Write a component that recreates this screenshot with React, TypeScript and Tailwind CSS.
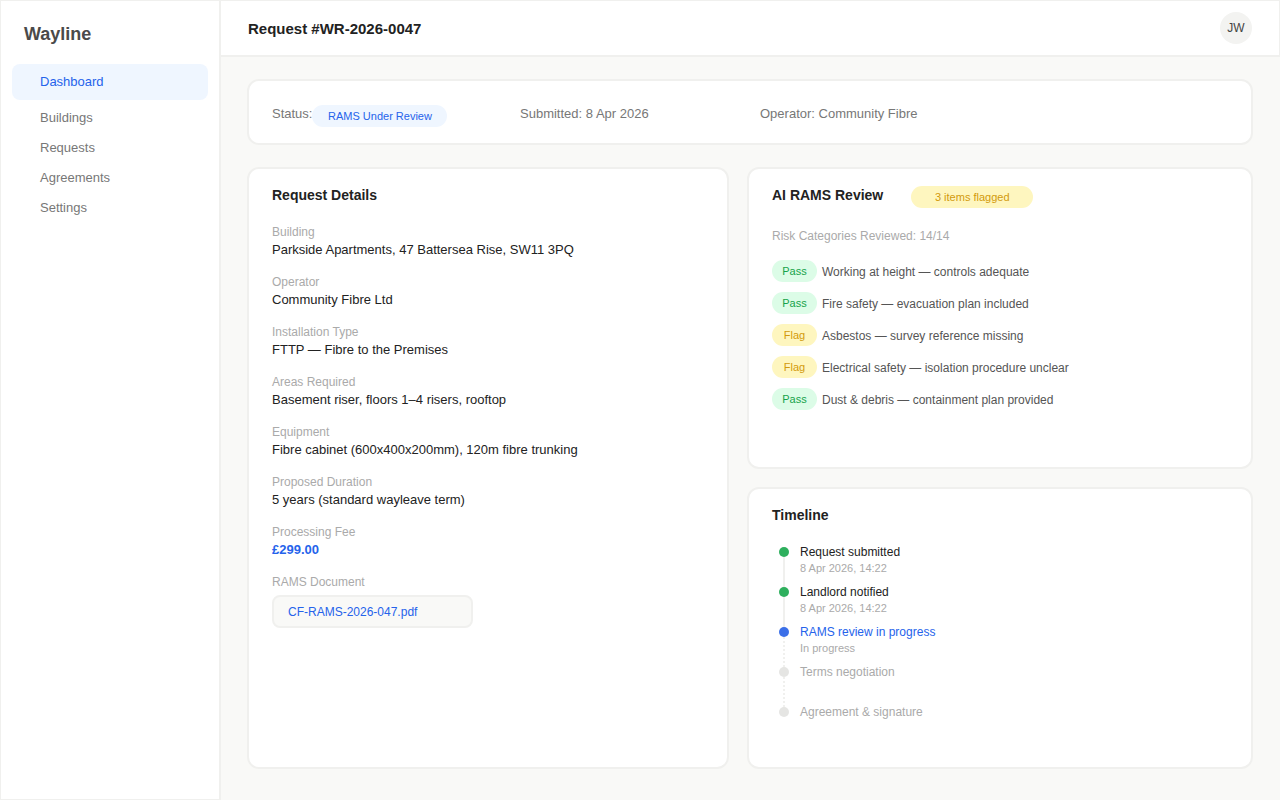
const navItems = ["Buildings", "Requests", "Agreements", "Settings"]

const details = [
  { label: "Building", value: "Parkside Apartments, 47 Battersea Rise, SW11 3PQ" },
  { label: "Operator", value: "Community Fibre Ltd" },
  { label: "Installation Type", value: "FTTP — Fibre to the Premises" },
  { label: "Areas Required", value: "Basement riser, floors 1–4 risers, rooftop" },
  { label: "Equipment", value: "Fibre cabinet (600x400x200mm), 120m fibre trunking" },
  { label: "Proposed Duration", value: "5 years (standard wayleave term)" },
]

const risks = [
  { status: "Pass", text: "Working at height — controls adequate" },
  { status: "Pass", text: "Fire safety — evacuation plan included" },
  { status: "Flag", text: "Asbestos — survey reference missing" },
  { status: "Flag", text: "Electrical safety — isolation procedure unclear" },
  { status: "Pass", text: "Dust & debris — containment plan provided" },
]

const timeline = [
  { title: "Request submitted", sub: "8 Apr 2026, 14:22", state: "done" },
  { title: "Landlord notified", sub: "8 Apr 2026, 14:22", state: "done" },
  { title: "RAMS review in progress", sub: "In progress", state: "active" },
  { title: "Terms negotiation", sub: "", state: "todo" },
  { title: "Agreement & signature", sub: "", state: "todo" },
]

function Card({ className, children }: { className: string; children: React.ReactNode }) {
  return <div className={`bg-white border-2 border-[#f0f0ee] rounded-xl ${className}`}>{children}</div>
}

export default function App() {
  return (
    <div className="flex h-[800px] w-[1280px] overflow-hidden bg-[#f9f9f7] font-['Liberation_Sans',Arial,sans-serif]">
      <aside className="w-[221px] shrink-0 bg-white border border-r-2 border-[#f0f0ee] px-[11px] pt-[22px]">
        <div className="pl-[12px] text-[18px] leading-[22px] font-bold text-[#4a4a4a]">Wayline</div>
        <nav className="mt-[19px] flex flex-col">
          <a className="h-9 mb-[3px] flex items-center rounded-lg bg-[#eff6ff] pl-[28px] text-[13px] text-[#2563eb]">Dashboard</a>
          {navItems.map((item) => (
            <a key={item} className="h-[30px] flex items-center pl-[28px] text-[13px] text-[#777777]">{item}</a>
          ))}
        </nav>
      </aside>

      <div className="flex-1 min-w-0 flex flex-col">
        <header className="h-[57px] shrink-0 bg-white border-t border-r border-b-2 border-[#f0f0ee] flex items-center justify-between pl-[27px] pr-[27px]">
          <h1 className="mt-[2px] text-[15px] font-bold text-[#222222]">Request #WR-2026-0047</h1>
          <div className="w-8 h-8 rounded-full bg-[#f3f3f1] flex items-center justify-center text-[12px] text-[#444444]">JW</div>
        </header>

        <main className="flex-1 min-h-0 pl-[26px] pr-[27px] pt-[22px] pb-[31px] flex flex-col gap-[22px]">
          <Card className="h-[66px] shrink-0 flex items-center pl-[23px] pt-[4px] text-[13px] text-[#777777]">
            <div className="w-[248px] flex items-center">
              <span>Status:</span>
              <span className="mt-[4px] h-[22px] w-[135px] flex items-center justify-center rounded-full bg-[#eff6ff] text-[11px] text-[#2563eb]">RAMS Under Review</span>
            </div>
            <div className="w-[240px]">Submitted: 8 Apr 2026</div>
            <div>Operator: Community Fibre</div>
          </Card>

          <div className="flex-1 min-h-0 flex gap-[18px]">
            <Card className="w-[482px] shrink-0 pl-[23px] pt-[16px]">
              <h2 className="text-[14px] leading-[20px] font-bold text-[#222222]">Request Details</h2>
              <dl className="mt-[18px] flex flex-col gap-[14px]">
                {details.map((d) => (
                  <div key={d.label}>
                    <dt className="text-[12px] leading-[18px] text-[#aaaaaa]">{d.label}</dt>
                    <dd className="text-[13px] leading-[18px] text-[#222222]">{d.value}</dd>
                  </div>
                ))}
                <div>
                  <dt className="text-[12px] leading-[18px] text-[#aaaaaa]">Processing Fee</dt>
                  <dd className="text-[13px] leading-[18px] font-bold text-[#2563eb]">£299.00</dd>
                </div>
                <div>
                  <dt className="text-[12px] leading-[18px] text-[#aaaaaa]">RAMS Document</dt>
                  <dd className="mt-[4px] w-[201px] h-[33px] flex items-center pl-[14px] rounded-lg bg-[#f9f9f7] border-2 border-[#f0f0ee] text-[12px] text-[#2563eb]">CF-RAMS-2026-047.pdf</dd>
                </div>
              </dl>
            </Card>

            <div className="flex-1 min-w-0 flex flex-col gap-[18px]">
              <Card className="h-[302px] shrink-0 pl-[23px] pt-[15px]">
                <div className="flex items-center h-[22px]">
                  <h2 className="text-[14px] font-bold text-[#222222]">AI RAMS Review</h2>
                  <span className="ml-[28px] mt-[4px] h-[22px] w-[122px] flex items-center justify-center rounded-full bg-[#fef6bf] text-[11px] text-[#d29a0c]">3 items flagged</span>
                </div>
                <div className="mt-[21px] text-[12px] leading-[18px] text-[#aaaaaa]">Risk Categories Reviewed: 14/14</div>
                <ul className="mt-[16px] flex flex-col gap-[10px]">
                  {risks.map((r) => (
                    <li key={r.text} className="flex items-center gap-[5px] h-[22px]">
                      <span className={`-mt-[2px] h-[22px] w-[45px] flex items-center justify-center rounded-full text-[11px] ${r.status === "Pass" ? "bg-[#dcfce7] text-[#16a34a]" : "bg-[#fef6bf] text-[#d29a0c]"}`}>{r.status}</span>
                      <span className="text-[12px] text-[#555555]">{r.text}</span>
                    </li>
                  ))}
                </ul>
              </Card>

              <Card className="flex-1 min-h-0 pl-[23px] pt-[16px]">
                <h2 className="text-[14px] leading-[20px] font-bold text-[#222222]">Timeline</h2>
                <ol className="mt-[19px]">
                  {timeline.map((t, i) => (
                    <li key={t.title} className="relative h-10 pl-[28px]">
                      <span className={`absolute left-[7px] top-[3px] w-[10px] h-[10px] rounded-full ${t.state === "done" ? "bg-[#2eaf5d]" : t.state === "active" ? "bg-[#3b6fe8]" : "bg-[#e5e5e3]"}`} />
                      {i < timeline.length - 1 && (
                        <span className={`absolute left-[11px] top-[13px] h-[30px] w-[2px] ${t.state === "done" ? "bg-[#f0f0ee]" : "border-l-2 border-dotted border-[#f0f0ee]"}`} />
                      )}
                      <div className={`text-[12px] leading-[16px] ${t.state === "done" ? "text-[#222222]" : t.state === "active" ? "text-[#2563eb]" : "text-[#aaaaaa]"}`}>{t.title}</div>
                      {t.sub && <div className="text-[11px] leading-[16px] text-[#aaaaaa]">{t.sub}</div>}
                    </li>
                  ))}
                </ol>
              </Card>
            </div>
          </div>
        </main>
      </div>
    </div>
  )
}
